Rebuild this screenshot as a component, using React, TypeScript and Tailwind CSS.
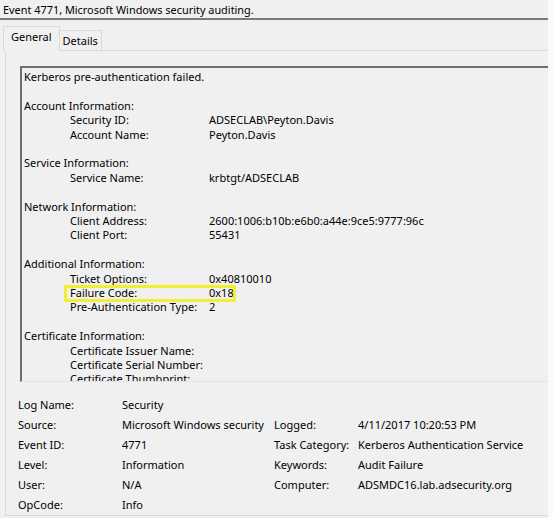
import React from "react";

type Row = { label: string; value?: string; highlight?: boolean };
type Section = { title: string; rows: Row[] };

const sections: Section[] = [
  {
    title: "Account Information:",
    rows: [
      { label: "Security ID:", value: "ADSECLAB\\Peyton.Davis" },
      { label: "Account Name:", value: "Peyton.Davis" },
    ],
  },
  {
    title: "Service Information:",
    rows: [{ label: "Service Name:", value: "krbtgt/ADSECLAB" }],
  },
  {
    title: "Network Information:",
    rows: [
      { label: "Client Address:", value: "2600:1006:b10b:e6b0:a44e:9ce5:9777:96c" },
      { label: "Client Port:", value: "55431" },
    ],
  },
  {
    title: "Additional Information:",
    rows: [
      { label: "Ticket Options:", value: "0x40810010" },
      { label: "Failure Code:", value: "0x18", highlight: true },
      { label: "Pre-Authentication Type:", value: "2" },
    ],
  },
  {
    title: "Certificate Information:",
    rows: [
      { label: "Certificate Issuer Name:" },
      { label: "Certificate Serial Number:" },
      { label: "Certificate Thumbprint:" },
    ],
  },
];

const summary: [string, string, string?, string?][] = [
  ["Log Name:", "Security"],
  ["Source:", "Microsoft Windows security", "Logged:", "4/11/2017 10:20:53 PM"],
  ["Event ID:", "4771", "Task Category:", "Kerberos Authentication Service"],
  ["Level:", "Information", "Keywords:", "Audit Failure"],
  ["User:", "N/A", "Computer:", "ADSMDC16.lab.adsecurity.org"],
  ["OpCode:", "Info"],
];

export default function App() {
  return (
    <div
      className="w-[553px] h-[518px] overflow-hidden bg-[#fafafa] text-[11px] text-black"
      style={{ fontFamily: '"Noto Sans", "Open Sans", sans-serif' }}
    >
      <div className="w-[548px] h-[518px] bg-[#f0f0f0] flex flex-col">
        {/* title bar */}
        <div className="h-[20px] pl-[3px] leading-[20px] text-[10.9px] border-b-2 border-[#7a7a7a]">
          Event 4771, Microsoft Windows security auditing.
        </div>

        {/* tabs */}
        <div className="flex items-end pl-[3px] mt-[5px] h-[25px]">
          <div className="h-[25px] px-[7px] leading-[20px] border border-b-0 border-[#d9d9d9] bg-[#f0f0f0] relative top-[1px]">
            General
          </div>
          <div className="h-[20px] px-[3px] leading-[20px] border border-l-0 border-b-0 border-[#d9d9d9]">
            Details
          </div>
        </div>

        {/* tab panel */}
        <div className="ml-[5px] flex-1 border-l border-t border-b border-[#d9d9d9] flex flex-col mb-[3px]">
          <div className="ml-[14px] mt-[15px] h-[316px] border-l-2 border-t-2 border-[#6e6e6e] border-b border-b-[#e3e3e3] overflow-hidden pl-[2px] pt-[2px] leading-[14.4px]">
            <div>Kerberos pre-authentication failed.</div>
            {sections.map((s) => (
              <div key={s.title} className="mt-[14.4px]">
                <div>{s.title}</div>
                {s.rows.map((r) => (
                  <div key={r.label} className="flex pl-[46px] relative">
                    <span className="w-[139px] shrink-0 whitespace-nowrap">{r.label}</span>
                    <span className="whitespace-nowrap">{r.value}</span>
                    {r.highlight && (
                      <span className="absolute left-[40px] top-[-1px] w-[172px] h-[17px] border-[3px] border-[#f2ee30] rounded-[2px]" />
                    )}
                  </div>
                ))}
              </div>
            ))}
          </div>

          {/* summary */}
          <div className="mt-[13px] flex flex-col">
            {summary.map(([l1, v1, l2, v2]) => (
              <div key={l1} className="flex h-[20px] leading-[20px] whitespace-nowrap">
                <span className="w-[116px] pl-[12px] shrink-0">{l1}</span>
                <span className="w-[152px] shrink-0">{v1}</span>
                {l2 && <span className="w-[84px] shrink-0">{l2}</span>}
                {v2 && <span>{v2}</span>}
              </div>
            ))}
          </div>
        </div>
      </div>
    </div>
  );
}
